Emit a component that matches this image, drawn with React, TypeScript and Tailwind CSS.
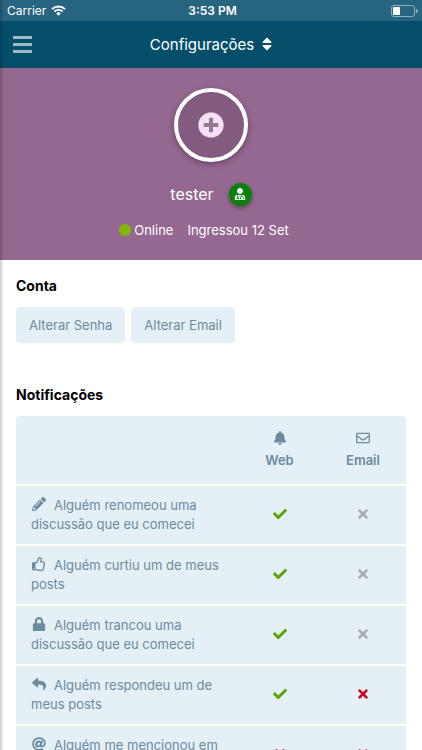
import React from "react";
import {
  FaAt,
  FaBell,
  FaCheck,
  FaLock,
  FaPencilAlt,
  FaPlusCircle,
  FaRegEnvelope,
  FaRegThumbsUp,
  FaReply,
  FaSort,
  FaTimes,
  FaUserMd,
} from "react-icons/fa";
import type { IconType } from "react-icons";

type State = "on" | "off" | "disabled";

const rows: { icon: IconType; label: string; web: State; email: State }[] = [
  { icon: FaPencilAlt, label: "Alguém renomeou uma discussão que eu comecei", web: "on", email: "disabled" },
  { icon: FaRegThumbsUp, label: "Alguém curtiu um de meus posts", web: "on", email: "disabled" },
  { icon: FaLock, label: "Alguém trancou uma discussão que eu comecei", web: "on", email: "disabled" },
  { icon: FaReply, label: "Alguém respondeu um de meus posts", web: "on", email: "off" },
  { icon: FaAt, label: "Alguém me mencionou em um post", web: "off", email: "off" },
];

function Toggle({ state, label }: { state: State; label: string }) {
  return (
    <label className="flex h-14 items-center justify-center pb-0.5">
      <input type="checkbox" className="sr-only" aria-label={label} defaultChecked={state === "on"} disabled={state === "disabled"} />
      {state === "on" ? (
        <FaCheck className="size-3.5 text-[#58a400]" />
      ) : (
        <FaTimes className={state === "off" ? "size-3.5 text-[#c8001c]" : "size-3.5 text-[#aaaaaa]"} />
      )}
    </label>
  );
}

function StatusBar() {
  return (
    <div className="grid h-[21px] grid-cols-3 items-center bg-[#27647f] pr-1 pl-[7px] text-xs text-white">
      <div className="flex items-center gap-[5px]">
        <span>Carrier</span>
        <svg viewBox="0 0 15 11" className="h-[11px] w-[15px]" aria-hidden="true">
          <path d="M1 4.1a9.2 9.2 0 0 1 13 0" fill="none" stroke="white" strokeWidth="2" />
          <path d="M3.4 6.5a5.8 5.8 0 0 1 8.2 0" fill="none" stroke="white" strokeWidth="1.8" />
          <path d="M5.2 8.4a3.2 3.2 0 0 1 4.6 0L7.5 10.8z" fill="white" />
        </svg>
      </div>
      <span className="text-center font-semibold">3:53 PM</span>
      <svg viewBox="0 0 27 12" className="h-3 w-[27px] justify-self-end" aria-hidden="true">
        <rect x="0.5" y="0.5" width="23" height="11" rx="2.5" fill="none" stroke="#8db0bf" />
        <rect x="2" y="2" width="7" height="8" rx="1" fill="white" />
        <path d="M25 4v4a2 2 0 0 0 0-4z" fill="#8db0bf" />
      </svg>
    </div>
  );
}

export default function App() {
  return (
    <div className="relative h-screen overflow-hidden bg-white font-['Inter',sans-serif] text-sm">
      <StatusBar />
      <header className="grid h-[47px] grid-cols-[32px_1fr_32px] items-center bg-[#044e6a] px-[13px] text-white">
        <button type="button" aria-label="Menu" className="flex h-8 items-center">
          <svg viewBox="0 0 19 17" className="h-[17px] w-[19px]" aria-hidden="true">
            <path d="M0 1.5h19M0 8.5h19M0 15.5h19" stroke="#9cb9c6" strokeWidth="3" />
          </svg>
        </button>
        <button type="button" className="flex items-center justify-center gap-2 text-[15px]">
          Configurações
          <FaSort className="h-4 w-2.5" />
        </button>
      </header>

      <section className="flex h-48 flex-col items-center bg-[#956892] pt-5 text-white">
        <button type="button" aria-label="Avatar" className="flex size-[74px] shrink-0 items-center justify-center rounded-full border-4 border-white bg-[#835a80] shadow-[0_2px_6px_rgba(0,0,0,0.35)]">
          <span className="flex rounded-full bg-[#8f7c91]">
            <FaPlusCircle className="size-[26px] text-[#f8dff6]" />
          </span>
        </button>
        <div className="mt-5 flex h-6 items-center gap-[15px]">
          <h1 className="text-base">tester</h1>
          <span className="flex size-[23px] items-center justify-center rounded-full bg-[#0b800b] shadow-[0_2px_4px_rgba(0,0,0,0.35)]">
            <FaUserMd className="size-3" />
          </span>
        </div>
        <div className="mt-3.5 flex h-5 items-center gap-3.5 pr-3.5 text-[13px]">
          <span className="flex items-center gap-[3px]">
            <span className="size-3 rounded-full bg-[#7fba00]" />
            Online
          </span>
          <span>Ingressou 12 Set</span>
        </div>
      </section>

      <main className="px-4 pt-4 text-[#667d99]">
        <h2 className="leading-5 font-bold text-black">Conta</h2>
        <div className="mt-[11px] flex gap-1.5 text-[13px] text-[#6b8ba0]">
          <button type="button" className="h-9 rounded bg-[#e4eff6] px-[13px]">Alterar Senha</button>
          <button type="button" className="h-9 rounded bg-[#e4eff6] px-[13px]">Alterar Email</button>
        </div>

        <h2 className="mt-[42px] leading-5 font-bold text-black">Notificações</h2>
        <table className="mt-[11px] w-full table-fixed border-collapse overflow-hidden rounded bg-[#e4eff6] text-[13px] leading-[19px] text-[#6b8ba0]">
          <thead>
            <tr className="h-[69px] border-b-2 border-white">
              <th />
              <th className="w-[81px] text-[13px] font-semibold">
                <FaBell className="mx-auto mb-1.5 size-3.5" />
                Web
              </th>
              <th className="w-[86px] text-[13px] font-semibold">
                <FaRegEnvelope className="mx-auto mb-1.5 size-3.5" />
                Email
              </th>
            </tr>
          </thead>
          <tbody>
            {rows.map(({ icon: Icon, label, web, email }) => (
              <tr key={label} className="h-[60px] border-b-2 border-white">
                <td className="pr-4 pl-[15px]">
                  <Icon className="mr-2 ml-px inline size-3.5 align-[-1px]" />
                  {label}
                </td>
                <td><Toggle state={web} label={`${label} – Web`} /></td>
                <td><Toggle state={email} label={`${label} – Email`} /></td>
              </tr>
            ))}
          </tbody>
        </table>
      </main>

      <div className="pointer-events-none absolute inset-y-0 left-0 w-1 bg-linear-to-r from-black/20 to-transparent" />
    </div>
  );
}
